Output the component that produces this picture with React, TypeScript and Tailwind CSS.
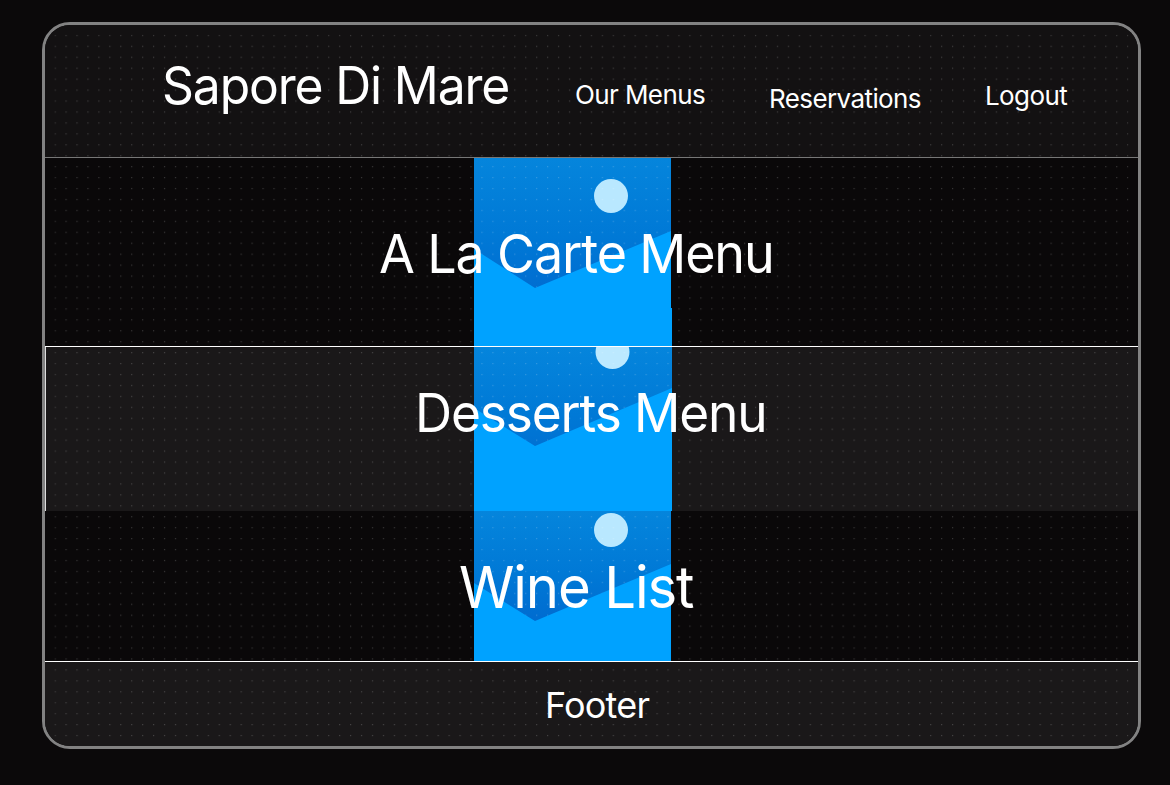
import type { ReactNode } from "react";

type ArtProps = { sun: string; peak: string; width: number; id: string; height: number; cy: number; place: string };

function Art({ sun, peak, width, id, height, cy, place }: ArtProps) {
  return (
    <>
      <svg className={`absolute top-0 ${place}`} width="198" height={height}>
        <defs>
          <linearGradient id={id} x1="0" y1="0" x2="0" y2="1">
            <stop offset="0" stopColor="#0585dc" />
            <stop offset="0.55" stopColor="#0079d6" />
            <stop offset="1" stopColor="#006bd0" />
          </linearGradient>
        </defs>
        <rect width={width} height={height * 0.75} fill={`url(#${id})`} />
        <circle cx={width === 198 ? 138.5 : 137} cy={cy} r="17" fill={sun} />
      </svg>
      <svg className={`absolute top-0 z-[11] ${place}`} width="198" height={height}>
        <path d={peak} fill="#00a2ff" />
      </svg>
    </>
  );
}

function Label({ className, stretch, children }: { className: string; stretch: string; children: ReactNode }) {
  return (
    <h2 className={`relative z-20 flex w-fit whitespace-nowrap font-normal leading-none ${className}`}>
      <span className={`block origin-left ${stretch}`}>{children}</span>
    </h2>
  );
}

export default function App() {
  return (
    <div className="h-[785px] w-[1170px] overflow-hidden bg-[#0b090a] pt-[22px] pl-[42px] font-['Inter',sans-serif] text-white">
      <div className="relative flex h-[727px] w-[1099px] flex-col overflow-hidden rounded-[28px] border-[3px] border-[#828282] bg-[#0a0809]">
        <header className="flex h-[133px] shrink-0 items-start border-b border-[#777] bg-[#131112]">
          <h1 className="relative z-20 mt-[35px] ml-[117px] w-[413px] origin-left scale-x-[0.958] whitespace-nowrap text-[52px] leading-none font-normal tracking-[-1.2px]">Sapore Di Mare</h1>
          <nav className="relative z-20 flex items-start whitespace-nowrap text-[26px] leading-none tracking-[-0.6px]">
            <a className="mt-[57px] w-[194px]">Our Menus</a>
            <a className="mt-[61px] w-[216px]">Reservations</a>
            <a className="mt-[58px]">Logout</a>
          </nav>
        </header>
        <section className="relative h-[189px] shrink-0 border-b border-white bg-[#0a0809]">
          <Art id="sky-carte" place="left-[429px]" width={197} height={188} cy={38} sun="#b9e8ff" peak="M0 91L61 130L197 73V150H198V188H0Z" />
          <Label stretch="scale-x-[0.964]" className="pt-[69px] pl-[334px] text-[54px] tracking-[-1.2px]">A La Carte Menu</Label>
        </section>
        <section className="relative h-[164px] shrink-0 border-l border-[#ddd] bg-[#1a1819]">
          <Art id="sky-desserts" place="left-[428px]" width={198} height={164} cy={5} sun="#bce9ff" peak="M0 61L61 99L198 41V164H0Z" />
          <Label stretch="scale-x-[0.97]" className="pt-[39.5px] pl-[369px] text-[53px] tracking-[-1.2px]">Desserts Menu</Label>
        </section>
        <section className="relative h-[151px] shrink-0 border-b border-white bg-[#0a0809]">
          <Art id="sky-wine" place="left-[429px]" width={197} height={150} cy={19} sun="#b9e8ff" peak="M0 72L61 110L197 53V150H0Z" />
          <Label stretch="scale-x-[0.971]" className="pt-[47px] pl-[414px] text-[58px] tracking-[-1.2px]">Wine List</Label>
        </section>
        <footer className="relative grow bg-[#1a1819]">
          <Label stretch="scale-x-100" className="pt-[25px] pl-[500px] text-[36px] tracking-[-0.8px]">Footer</Label>
        </footer>
        <svg className="pointer-events-none absolute inset-0 z-10" width="1093" height="721">
          <defs>
            <pattern id="dots" x="9.5" y="9.8" width="10.945" height="10.94" patternUnits="userSpaceOnUse">
              <rect width="1.2" height="1.2" fill="#fff" fillOpacity="0.19" />
            </pattern>
          </defs>
          <rect x="9.5" y="9.8" width="1074" height="702" fill="url(#dots)" />
        </svg>
      </div>
    </div>
  );
}
